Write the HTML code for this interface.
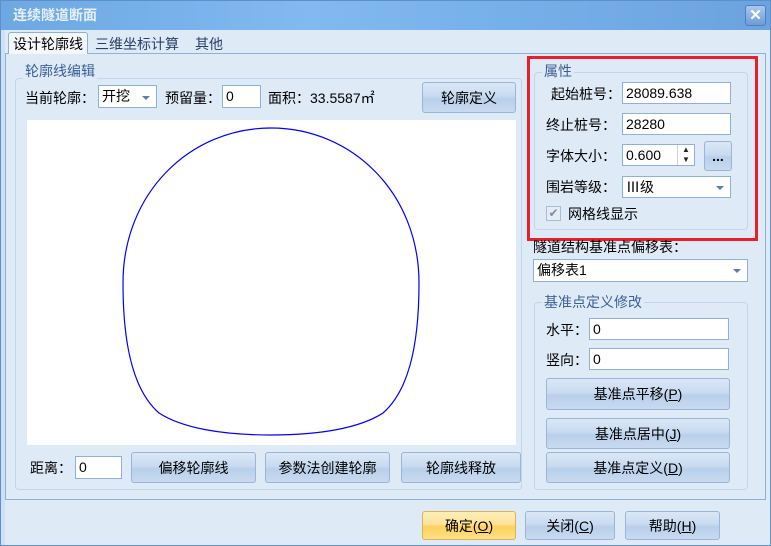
<!DOCTYPE html>
<html><head><meta charset="utf-8"><style>
*{box-sizing:border-box;margin:0;padding:0}
body{width:771px;height:546px;overflow:hidden;font-family:"Liberation Sans","Noto Sans CJK SC",sans-serif;font-size:14px;color:#000;background:#dfeaf7;position:relative}
.a{position:absolute}
.t{position:absolute;white-space:nowrap;line-height:16px}
.inp{position:absolute;background:#fff;border:1px solid #8fb0d8;padding:1px 3px;line-height:18px;font-size:14px;color:#000}
.btn{position:absolute;border:1px solid #9ab5d8;border-radius:3px;background:linear-gradient(#dbe7f6 0%,#c9dbf1 45%,#b9cfea 55%,#c8daf0 100%);text-align:center;font-size:14px;color:#000;display:flex;align-items:center;justify-content:center}
.grp{position:absolute;border:1px solid #c2d5ec;border-radius:4px}
.gl{position:absolute;background:#dfeaf7;color:#3a5f96;padding:0 2px;line-height:16px}
.arr{position:absolute;width:0;height:0;border-left:4px solid transparent;border-right:4px solid transparent;border-top:4px solid #5b7db0}
u{text-decoration:underline}
</style></head><body>
<div class="a" style="left:0;top:0;width:771px;height:546px;border:1px solid #5f8fc9"></div>
<div class="a" style="left:1px;top:1px;width:769px;height:29px;background:linear-gradient(90deg,#6ea8e2,#80baf0 40%,#6aa3df)"></div>
<div class="t" style="left:13px;top:7px;color:#e6f0fb;font-weight:bold;font-size:14px">连续隧道断面</div>
<div class="a" style="left:745px;top:5px;width:21px;height:21px;border:1px solid #4f7fbf;border-radius:3px;background:linear-gradient(#a9c9ee,#6d9bd6);color:#fff;font-weight:bold;text-align:center;line-height:19px;font-size:15px">✕</div>
<div class="a" style="left:1px;top:30px;width:4px;height:515px;background:#cfe0f4"></div>
<div class="a" style="left:5px;top:53px;width:761px;height:447px;border:1px solid #8fb0d8;background:#dfeaf7"></div>
<div class="a" style="left:8px;top:32px;width:80px;height:22px;background:#f4f8fd;border:1px solid #8fb0d8;border-bottom:none;border-radius:3px 3px 0 0"></div>
<div class="t" style="left:13px;top:36px">设计轮廓线</div>
<div class="t" style="left:95px;top:36px;color:#2a3f66">三维坐标计算</div>
<div class="t" style="left:195px;top:36px;color:#2a3f66">其他</div>
<div class="grp" style="left:15px;top:78px;width:507px;height:412px"></div>
<div class="gl" style="left:23px;top:63px">轮廓线编辑</div>
<div class="t" style="left:25px;top:90px">当前轮廓：</div>
<div class="inp" style="left:98px;top:85px;width:59px;height:23px">开挖</div>
<div class="arr" style="left:142px;top:96px"></div>
<div class="t" style="left:165px;top:90px">预留量：</div>
<div class="inp" style="left:222px;top:85px;width:39px;height:23px">0</div>
<div class="t" style="left:268px;top:90px">面积：33.5587㎡</div>
<div class="btn" style="left:422px;top:82px;width:94px;height:31px">轮廓定义</div>
<div class="a" style="left:27px;top:120px;width:489px;height:325px;background:#fff"></div>
<svg class="a" style="left:0;top:0" width="771" height="546"><path d="M123,283 C123,193 190,128 271,128 C352,128 419,193 419,283 C419,350 407,392 383,413 C360,428 320,435 271,435 C222,435 182,428 159,413 C135,392 123,350 123,283Z" fill="none" stroke="#0000ff" stroke-width="1.2"/></svg>
<div class="t" style="left:30px;top:460px">距离：</div>
<div class="inp" style="left:75px;top:456px;width:47px;height:23px">0</div>
<div class="btn" style="left:131px;top:452px;width:125px;height:31px">偏移轮廓线</div>
<div class="btn" style="left:265px;top:452px;width:125px;height:31px">参数法创建轮廓</div>
<div class="btn" style="left:401px;top:452px;width:120px;height:31px">轮廓线释放</div>
<div class="grp" style="left:534px;top:72px;width:214px;height:158px"></div>
<div class="gl" style="left:542px;top:63px">属性</div>
<div class="t" style="left:551px;top:86px">起始桩号：</div>
<div class="inp" style="left:622px;top:82px;width:109px;height:22px">28089.638</div>
<div class="t" style="left:546px;top:117px">终止桩号：</div>
<div class="inp" style="left:622px;top:113px;width:109px;height:22px">28280</div>
<div class="t" style="left:546px;top:148px">字体大小：</div>
<div class="inp" style="left:622px;top:144px;width:73px;height:22px">0.600</div>
<div class="a" style="left:677px;top:145px;width:17px;height:20px;border-left:1px solid #c2d5ec;font-size:8px;line-height:10px;text-align:center;color:#223">▲<br>▼</div>
<div class="btn" style="left:704px;top:141px;width:28px;height:30px;font-weight:bold">...</div>
<div class="t" style="left:546px;top:179px">围岩等级：</div>
<div class="inp" style="left:622px;top:176px;width:109px;height:22px">Ⅲ级</div>
<div class="arr" style="left:716px;top:186px"></div>
<div class="a" style="left:546px;top:206px;width:15px;height:15px;border:1px solid #a9bcd6;background:#e4ecf6;color:#7e8ea6;font-size:12px;line-height:13px;text-align:center">✔</div>
<div class="t" style="left:568px;top:206px">网格线显示</div>
<div class="a" style="left:527px;top:56px;width:231px;height:185px;border:3px solid #e8202a"></div>
<div class="t" style="left:533px;top:239px">隧道结构基准点偏移表：</div>
<div class="inp" style="left:533px;top:259px;width:215px;height:23px">偏移表1</div>
<div class="arr" style="left:733px;top:269px"></div>
<div class="grp" style="left:534px;top:302px;width:214px;height:188px"></div>
<div class="gl" style="left:542px;top:294px">基准点定义修改</div>
<div class="t" style="left:546px;top:322px">水平：</div>
<div class="inp" style="left:589px;top:318px;width:140px;height:22px">0</div>
<div class="t" style="left:546px;top:352px">竖向：</div>
<div class="inp" style="left:589px;top:348px;width:140px;height:22px">0</div>
<div class="btn" style="left:546px;top:378px;width:184px;height:32px">基准点平移(<u>P</u>)</div>
<div class="btn" style="left:546px;top:418px;width:184px;height:31px">基准点居中(<u>J</u>)</div>
<div class="btn" style="left:546px;top:452px;width:184px;height:31px">基准点定义(<u>D</u>)</div>
<div class="btn" style="left:422px;top:511px;width:94px;height:29px;border-color:#d9b25a;background:linear-gradient(#fdeeb8 0%,#fde39a 45%,#fdd25a 55%,#fee08a 100%)">确定(<u>O</u>)</div>
<div class="btn" style="left:525px;top:511px;width:90px;height:29px">关闭(<u>C</u>)</div>
<div class="btn" style="left:625px;top:511px;width:95px;height:29px">帮助(<u>H</u>)</div>
</body></html>
